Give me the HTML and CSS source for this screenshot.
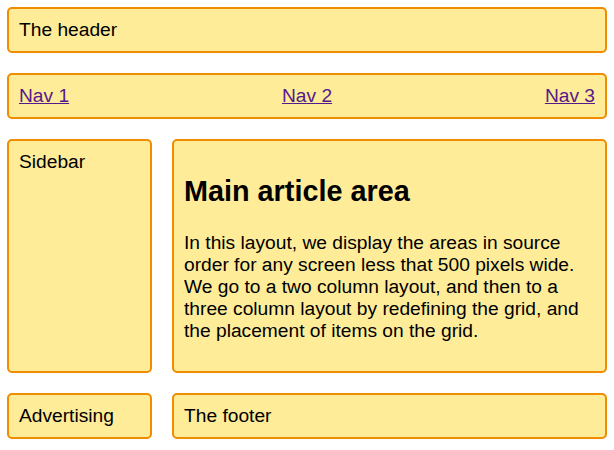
FILE: index.html
```html
<!DOCTYPE html>
<html>
<head>
<meta charset="utf-8">
<link rel="stylesheet" href="styles.css">
</head>
<body>
<div class="wrapper">
  <header class="main-head">The header</header>
  <nav class="main-nav">
    <ul>
      <li><a href="#">Nav 1</a></li>
      <li><a href="#">Nav 2</a></li>
      <li><a href="#">Nav 3</a></li>
    </ul>
  </nav>
  <aside class="side">Sidebar</aside>
  <article class="content">
    <h1>Main article area</h1>
    <p>In this layout, we display the areas in source order for any screen less that 500 pixels wide. We go to a two column layout, and then to a three column layout by redefining the grid, and the placement of items on the grid.</p>
  </article>
  <div class="ad">Advertising</div>
  <footer class="main-footer">The footer</footer>
</div>
</body>
</html>
```
FILE: styles.css
```css
body {
  margin: 0;
  padding: 7px;
  font-family: "Liberation Sans", Arial, sans-serif;
  font-size: 19.2px;
  color: #000;
}
.wrapper {
  display: grid;
  grid-template-columns: 1fr 3fr;
  gap: 20px;
  width: 600px;
}
.wrapper > * {
  background-color: #ffec99;
  border: 2px solid #f08c00;
  border-radius: 5px;
  padding: 10px;
}
.main-head, .main-nav {
  grid-column: 1 / 3;
}
.main-nav ul {
  list-style: none;
  margin: 0;
  padding: 0;
  display: flex;
  justify-content: space-between;
}
.main-nav a {
  color: #551a8b;
}
.content h1 {
  font-size: 1.5em;
  margin: 0.83em 0;
}
.content p {
  margin: 1em 0;
}
```
